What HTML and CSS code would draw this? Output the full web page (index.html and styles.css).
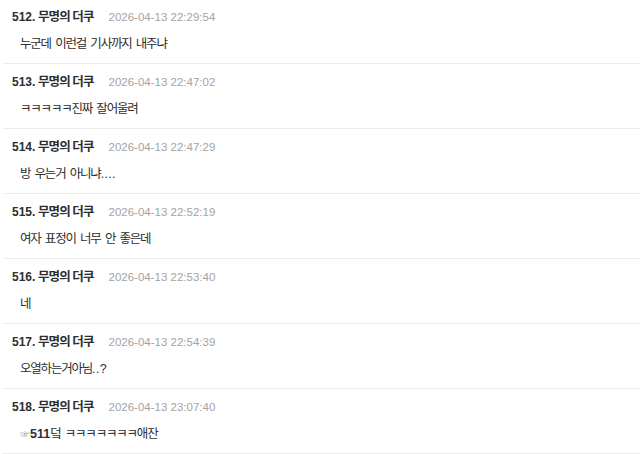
FILE: index.html
```html
<!DOCTYPE html>
<html lang="ko">
<head>
<meta charset="utf-8">
<link rel="stylesheet" href="styles.css">
</head>
<body>
<ul class="comments">
  <li class="comment first">
    <div class="head"><span class="author"><span class="num">512.</span> 무명의 더쿠</span><span class="date">2026-04-13 22:29:54</span></div>
    <div class="body">누군데 이런걸 기사까지 내주냐</div>
  </li>
  <li class="comment">
    <div class="head"><span class="author"><span class="num">513.</span> 무명의 더쿠</span><span class="date">2026-04-13 22:47:02</span></div>
    <div class="body">ㅋㅋㅋㅋㅋ진짜 잘어울려</div>
  </li>
  <li class="comment">
    <div class="head"><span class="author"><span class="num">514.</span> 무명의 더쿠</span><span class="date">2026-04-13 22:47:29</span></div>
    <div class="body">방 우는거 아니냐<span class="dots">....</span></div>
  </li>
  <li class="comment">
    <div class="head"><span class="author"><span class="num">515.</span> 무명의 더쿠</span><span class="date">2026-04-13 22:52:19</span></div>
    <div class="body">여자 표정이 너무 안 좋은데</div>
  </li>
  <li class="comment">
    <div class="head"><span class="author"><span class="num">516.</span> 무명의 더쿠</span><span class="date">2026-04-13 22:53:40</span></div>
    <div class="body">네</div>
  </li>
  <li class="comment">
    <div class="head"><span class="author"><span class="num">517.</span> 무명의 더쿠</span><span class="date">2026-04-13 22:54:39</span></div>
    <div class="body">오열하는거아님<span class="dots">..?</span></div>
  </li>
  <li class="comment">
    <div class="head"><span class="author"><span class="num">518.</span> 무명의 더쿠</span><span class="date">2026-04-13 23:07:40</span></div>
    <div class="body"><span class="ref"><span class="hand">☞</span>511</span>덬 ㅋㅋㅋㅋㅋㅋㅋ애잔</div>
  </li>
</ul>
</body>
</html>
```
FILE: styles.css
```css
html, body {
  margin: 0;
  padding: 0;
  background: #fff;
}
body {
  font-family: "Liberation Sans", "Noto Sans CJK KR", sans-serif;
  color: #333;
  overflow: hidden;
}
.comments {
  list-style: none;
  margin: 0;
  padding: 0 0 0 3px;
}
.comment {
  height: 64px;
  border-bottom: 1px solid #ececec;
  padding-left: 9px;
  box-sizing: content-box;
  display: flex;
  flex-direction: column;
}
.comment.first {
  margin-top: -1px;
}
.head {
  display: flex;
  align-items: baseline;
  gap: 15px;
  margin-top: 10px;
  height: 16px;
  line-height: 16px;
}
.author {
  font-size: 12.5px;
  font-weight: bold;
  color: #2e2e2e;
  letter-spacing: -0.9px;
}
.num {
  font-size: 12px;
  letter-spacing: 0;
}
.date {
  font-size: 11.5px;
  color: #a3a3a3;
}
.body {
  margin-top: 11px;
  padding-left: 8px;
  font-size: 12.5px;
  line-height: 17px;
  letter-spacing: -1.2px;
  word-spacing: 2px;
  color: #2e2e2e;
}
.dots {
  letter-spacing: 0.3px;
}
.ref {
  font-weight: bold;
  letter-spacing: 0;
}
.hand {
  font-weight: normal;
  color: #999;
  font-size: 10px;
}
```
